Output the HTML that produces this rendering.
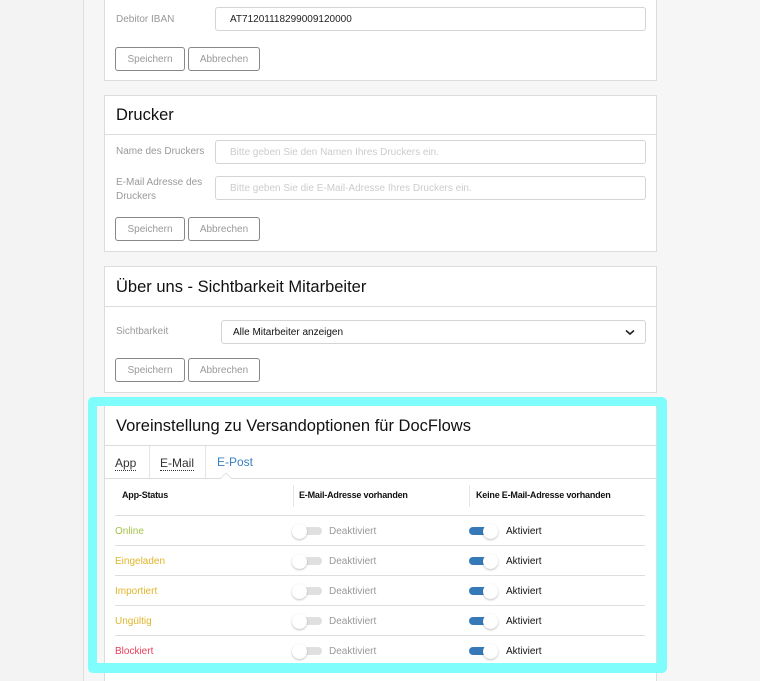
<!DOCTYPE html>
<html style="overflow:hidden;height:681px"><head><meta charset="utf-8"><style>
*{box-sizing:border-box;margin:0;padding:0}
body{width:760px;height:681px;background:#f6f6f6;font-family:"Liberation Sans",sans-serif;position:relative;overflow:hidden}
.a{position:absolute}
.side{left:0;top:0;width:84px;height:681px;background:#f3f3f3;border-right:1px solid #dedede}
.card{position:absolute;left:104px;width:553px;background:#fff;border:1px solid #dcdcdc}
.title{position:absolute;left:11px;font-size:16.5px;color:#111}
.hr{position:absolute;left:0;right:0;height:1px;background:#dcdcdc}
.lbl{position:absolute;font-size:10px;color:#999;line-height:14px}
.inp{position:absolute;border:1px solid #d4d4d4;border-radius:3px;font-size:10px;padding-left:14px;display:flex;align-items:center;color:#ccc;height:24px}
.btn{position:absolute;height:24px;border:1px solid #888;border-radius:3px;font-size:10px;color:#999;display:flex;align-items:center;justify-content:center}
.row{position:absolute;left:115px;width:530px;height:1px;background:#dedede}
.st{position:absolute;left:115px;font-size:10px}
.off .k,.on .k{position:absolute;width:15px;height:15px;border-radius:50%;background:#fff;box-shadow:0 1px 2px rgba(0,0,0,.25)}
.off,.on{position:absolute;width:32px;height:16px}
.off .t{position:absolute;left:12px;top:4px;width:18px;height:8px;border-radius:4px;background:#e0e0e0}
.off .k{left:0;top:1px}
.on .t{position:absolute;left:0;top:4px;width:19px;height:8px;border-radius:4px;background:#3679b9}
.on .k{left:14px;top:1px}
.tx{position:absolute;font-size:10px}
.th{position:absolute;top:490px;font-weight:bold;color:#111;font-size:9px;letter-spacing:-0.2px}
</style></head><body>
<div class="a side"></div>

<div class="card" style="top:-5px;height:86px">
 <div class="lbl" style="left:11px;top:17px">Debitor IBAN</div>
 <div class="inp" style="left:110px;top:11px;width:431px;color:#222">AT71201118299009120000</div>
 <div class="btn" style="left:10px;top:51px;width:70px">Speichern</div>
 <div class="btn" style="left:83px;top:51px;width:72px">Abbrechen</div>
</div>

<div class="card" style="top:95px;height:157px">
 <div class="title" style="top:10px">Drucker</div>
 <div class="hr" style="top:38px"></div>
 <div class="lbl" style="left:11px;top:49px">Name des Druckers</div>
 <div class="inp" style="left:110px;top:44px;width:431px">Bitte geben Sie den Namen Ihres Druckers ein.</div>
 <div class="lbl" style="left:11px;top:80px">E-Mail Adresse des<br>Druckers</div>
 <div class="inp" style="left:110px;top:80px;width:431px">Bitte geben Sie die E-Mail-Adresse Ihres Druckers ein.</div>
 <div class="btn" style="left:10px;top:121px;width:70px">Speichern</div>
 <div class="btn" style="left:83px;top:121px;width:72px">Abbrechen</div>
</div>

<div class="card" style="top:266px;height:127px">
 <div class="title" style="top:11px">Über uns - Sichtbarkeit Mitarbeiter</div>
 <div class="hr" style="top:39px"></div>
 <div class="lbl" style="left:11px;top:58px">Sichtbarkeit</div>
 <div class="inp" style="left:116px;top:53px;width:425px;color:#111;padding-left:11px">Alle Mitarbeiter anzeigen
  <svg style="position:absolute;right:10px;top:8px" width="10" height="7" viewBox="0 0 10 7"><path d="M1 1.5L5 5L9 1.5" stroke="#222" stroke-width="1.6" fill="none"/></svg></div>
 <div class="btn" style="left:10px;top:91px;width:70px">Speichern</div>
 <div class="btn" style="left:83px;top:91px;width:72px">Abbrechen</div>
</div>

<div class="card" style="top:405px;height:276px;border-bottom:none">
 <div class="title" style="top:11px">Voreinstellung zu Versandoptionen für DocFlows</div>
 <div class="hr" style="top:39px"></div>
 <div class="a" style="left:44px;top:40px;width:1px;height:33px;background:#e4e4e4"></div>
 <div class="a" style="left:100px;top:40px;width:1px;height:33px;background:#e4e4e4"></div>
 <div class="a" style="left:10px;top:51px;font-size:12px;color:#333;border-bottom:1px dotted #333;line-height:13px">App</div>
 <div class="a" style="left:55px;top:51px;font-size:12px;color:#333;border-bottom:1px dotted #333;line-height:13px">E-Mail</div>
 <div class="a" style="left:112px;top:49px;font-size:12px;color:#3a7fc1">E-Post</div>
 <div class="hr" style="top:72px"></div>
 <div class="a" style="left:117px;top:68px;width:8px;height:8px;background:#fff;border-left:1px solid #e4e4e4;border-top:1px solid #e4e4e4;transform:rotate(45deg)"></div>
</div>
<div class="th" style="left:122px">App-Status</div>
<div class="a" style="left:293px;top:485px;width:1px;height:22px;background:#e4e4e4"></div>
<div class="th" style="left:299px">E-Mail-Adresse vorhanden</div>
<div class="a" style="left:469px;top:485px;width:1px;height:22px;background:#e4e4e4"></div>
<div class="th" style="left:476px">Keine E-Mail-Adresse vorhanden</div>
<div class="row" style="top:515px"></div>

<div class="st" style="top:526px;color:#a4c44a">Online</div>
<div class="off" style="left:292px;top:523px"><div class="t"></div><div class="k"></div></div>
<div class="tx" style="left:329px;top:526px;color:#999">Deaktiviert</div>
<div class="on" style="left:469px;top:523px"><div class="t"></div><div class="k"></div></div>
<div class="tx" style="left:506px;top:526px;color:#111">Aktiviert</div>
<div class="row" style="top:545px"></div>

<div class="st" style="top:556px;color:#e0b52a">Eingeladen</div>
<div class="off" style="left:292px;top:553px"><div class="t"></div><div class="k"></div></div>
<div class="tx" style="left:329px;top:556px;color:#999">Deaktiviert</div>
<div class="on" style="left:469px;top:553px"><div class="t"></div><div class="k"></div></div>
<div class="tx" style="left:506px;top:556px;color:#111">Aktiviert</div>
<div class="row" style="top:575px"></div>

<div class="st" style="top:586px;color:#e0b52a">Importiert</div>
<div class="off" style="left:292px;top:583px"><div class="t"></div><div class="k"></div></div>
<div class="tx" style="left:329px;top:586px;color:#999">Deaktiviert</div>
<div class="on" style="left:469px;top:583px"><div class="t"></div><div class="k"></div></div>
<div class="tx" style="left:506px;top:586px;color:#111">Aktiviert</div>
<div class="row" style="top:605px"></div>

<div class="st" style="top:616px;color:#e0b52a">Ungültig</div>
<div class="off" style="left:292px;top:613px"><div class="t"></div><div class="k"></div></div>
<div class="tx" style="left:329px;top:616px;color:#999">Deaktiviert</div>
<div class="on" style="left:469px;top:613px"><div class="t"></div><div class="k"></div></div>
<div class="tx" style="left:506px;top:616px;color:#111">Aktiviert</div>
<div class="row" style="top:635px"></div>

<div class="st" style="top:646px;color:#e8405a">Blockiert</div>
<div class="off" style="left:292px;top:643px"><div class="t"></div><div class="k"></div></div>
<div class="tx" style="left:329px;top:646px;color:#999">Deaktiviert</div>
<div class="on" style="left:469px;top:643px"><div class="t"></div><div class="k"></div></div>
<div class="tx" style="left:506px;top:646px;color:#111">Aktiviert</div>

<div class="a" style="left:88px;top:397px;width:579px;height:276px;border:solid #7ffcfc;border-width:9px 10px 10px 9px;border-radius:5px"></div>
</body></html>
